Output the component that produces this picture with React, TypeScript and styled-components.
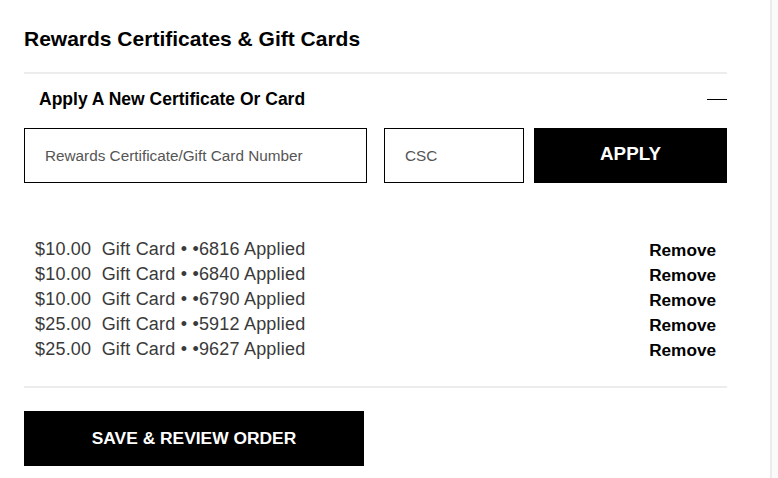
import React from "react";
import styled, { createGlobalStyle } from "styled-components";

const Global = createGlobalStyle`
  html, body { margin: 0; padding: 0; background: #fafafa; }
  body { font-family: "Liberation Sans", Arial, sans-serif; }
  * { box-sizing: border-box; }
`;

const Page = styled.div`
  display: flex;
  min-height: 478px;
`;

const Panel = styled.div`
  width: 772px;
  background: #fff;
  border-right: 2px solid #ececec;
  padding: 25px 43px 12px 24px;
  min-height: 478px;
`;

const Title = styled.h2`
  margin: 0;
  font-size: 21px;
  font-weight: 700;
  color: #000;
  line-height: 28px;
  padding-bottom: 19px;
  border-bottom: 2px solid #ececec;
`;

const SubHeader = styled.div`
  display: flex;
  align-items: center;
  justify-content: space-between;
  height: 50px;
  padding-left: 15px;
`;

const SubTitle = styled.span`
  font-size: 17.5px;
  font-weight: 700;
  color: #000;
`;

const Minus = styled.span`
  display: block;
  width: 20px;
  height: 1px;
  background: #000;
`;

const FormRow = styled.div`
  display: flex;
  align-items: stretch;
  height: 55px;
  margin-top: 4px;
`;

const Field = styled.div<{ $w: number; $mr: number }>`
  width: ${(p) => p.$w}px;
  margin-right: ${(p) => p.$mr}px;
  border: 1px solid #000;
  display: flex;
  align-items: center;
  padding-left: 20px;
  font-size: 15.3px;
  color: #555;
`;

const BlackButton = styled.button<{ $w: number; $fs: number }>`
  width: ${(p) => p.$w}px;
  height: 55px;
  background: #000;
  color: #fff;
  border: none;
  font-family: "Liberation Sans", Arial, sans-serif;
  font-weight: 700;
  font-size: ${(p) => p.$fs}px;
  display: flex;
  align-items: center;
  justify-content: center;
  padding: 0 0 ${(p) => (p.$fs > 18 ? 4 : 1)}px;
`;

const List = styled.div`
  display: flex;
  flex-direction: column;
  padding: 54px 11px 24px 11px;
  border-bottom: 2px solid #ececec;
`;

const Row = styled.div`
  display: flex;
  justify-content: space-between;
  align-items: center;
  height: 25px;
`;

const RowText = styled.span`
  font-size: 18px;
  letter-spacing: 0.2px;
  color: #3a3a3a;
  white-space: pre;
`;

const Remove = styled.span`
  font-size: 17.2px;
  font-weight: 700;
  color: #000;
  padding-top: 2px;
`;

const Footer = styled.div`
  padding-top: 23px;
`;

const cards = [
  ["$10.00", "6816"],
  ["$10.00", "6840"],
  ["$10.00", "6790"],
  ["$25.00", "5912"],
  ["$25.00", "9627"],
];

export default function App() {
  return (
    <>
      <Global />
      <Page>
        <Panel>
          <Title>Rewards Certificates &amp; Gift Cards</Title>
          <SubHeader>
            <SubTitle>Apply A New Certificate Or Card</SubTitle>
            <Minus />
          </SubHeader>
          <FormRow>
            <Field $w={343} $mr={17}>Rewards Certificate/Gift Card Number</Field>
            <Field $w={140} $mr={10}>CSC</Field>
            <BlackButton $w={193} $fs={18.8}>APPLY</BlackButton>
          </FormRow>
          <List>
            {cards.map(([amt, num]) => (
              <Row key={num}>
                <RowText>{`${amt}  Gift Card \u2022 \u2022${num} Applied`}</RowText>
                <Remove>Remove</Remove>
              </Row>
            ))}
          </List>
          <Footer>
            <BlackButton $w={340} $fs={17.4}>SAVE &amp; REVIEW ORDER</BlackButton>
          </Footer>
        </Panel>
      </Page>
    </>
  );
}
